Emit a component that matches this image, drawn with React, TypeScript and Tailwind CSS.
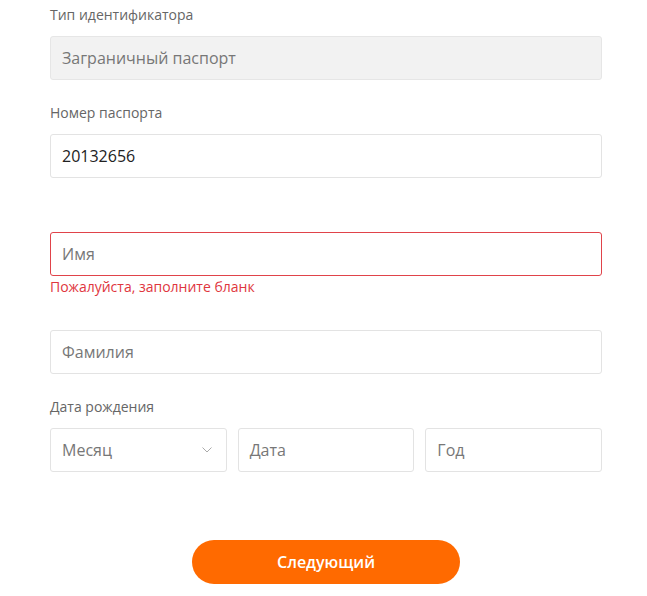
const font = { fontFamily: '"Open Sans", "Noto Sans", sans-serif' };

const Label = ({ children }: { children: string }) => (
  <div className="text-[14px] leading-[20px] text-[#666] h-[20px]">{children}</div>
);

const Field = ({
  text,
  filled,
  disabled,
  error,
}: {
  text: string;
  filled?: boolean;
  disabled?: boolean;
  error?: boolean;
}) => (
  <div
    className={
      "h-[44px] rounded-[3px] border flex items-center px-[11px] text-[16px] " +
      (disabled
        ? "bg-[#f2f2f2] border-[#e6e6e6] text-[#777]"
        : error
          ? "bg-white border-[#e0434a] text-[#777]"
          : "bg-white border-[#e3e3e3] " + (filled ? "text-[#222]" : "text-[#777]"))
    }
  >
    {text}
  </div>
);

export default function App() {
  return (
    <div className="w-[647px] h-[596px] bg-white" style={font}>
      <div className="w-[552px] ml-[50px] pt-[5px] flex flex-col">
        <Label>Тип идентификатора</Label>
        <div className="mt-[11px]">
          <Field text="Заграничный паспорт" disabled />
        </div>
        <div className="mt-[23px]">
          <Label>Номер паспорта</Label>
        </div>
        <div className="mt-[11px]">
          <Field text="20132656" filled />
        </div>
        <div className="mt-[54px]">
          <Field text="Имя" error />
        </div>
        <div className="mt-[1px] text-[14px] leading-[20px] text-[#e0363e]">Пожалуйста, заполните бланк</div>
        <div className="mt-[33px]">
          <Field text="Фамилия" />
        </div>
        <div className="mt-[23px]">
          <Label>Дата рождения</Label>
        </div>
        <div className="mt-[11px] grid grid-cols-3 gap-[11px]">
          <div className="h-[44px] rounded-[3px] border border-[#e3e3e3] flex items-center justify-between pl-[11px] pr-[14px] text-[16px] text-[#777]">
            <span>Месяц</span>
            <svg width="10" height="6" viewBox="0 0 10 6" fill="none">
              <path d="M0.5 0.5L5 5L9.5 0.5" stroke="#aaa" strokeWidth="1" />
            </svg>
          </div>
          <Field text="Дата" />
          <Field text="Год" />
        </div>
        <div className="mt-[68px] flex justify-center">
          <button className="w-[268px] h-[44px] rounded-full bg-[#ff6a00] text-white text-[16px] font-semibold">
            Следующий
          </button>
        </div>
      </div>
    </div>
  );
}
